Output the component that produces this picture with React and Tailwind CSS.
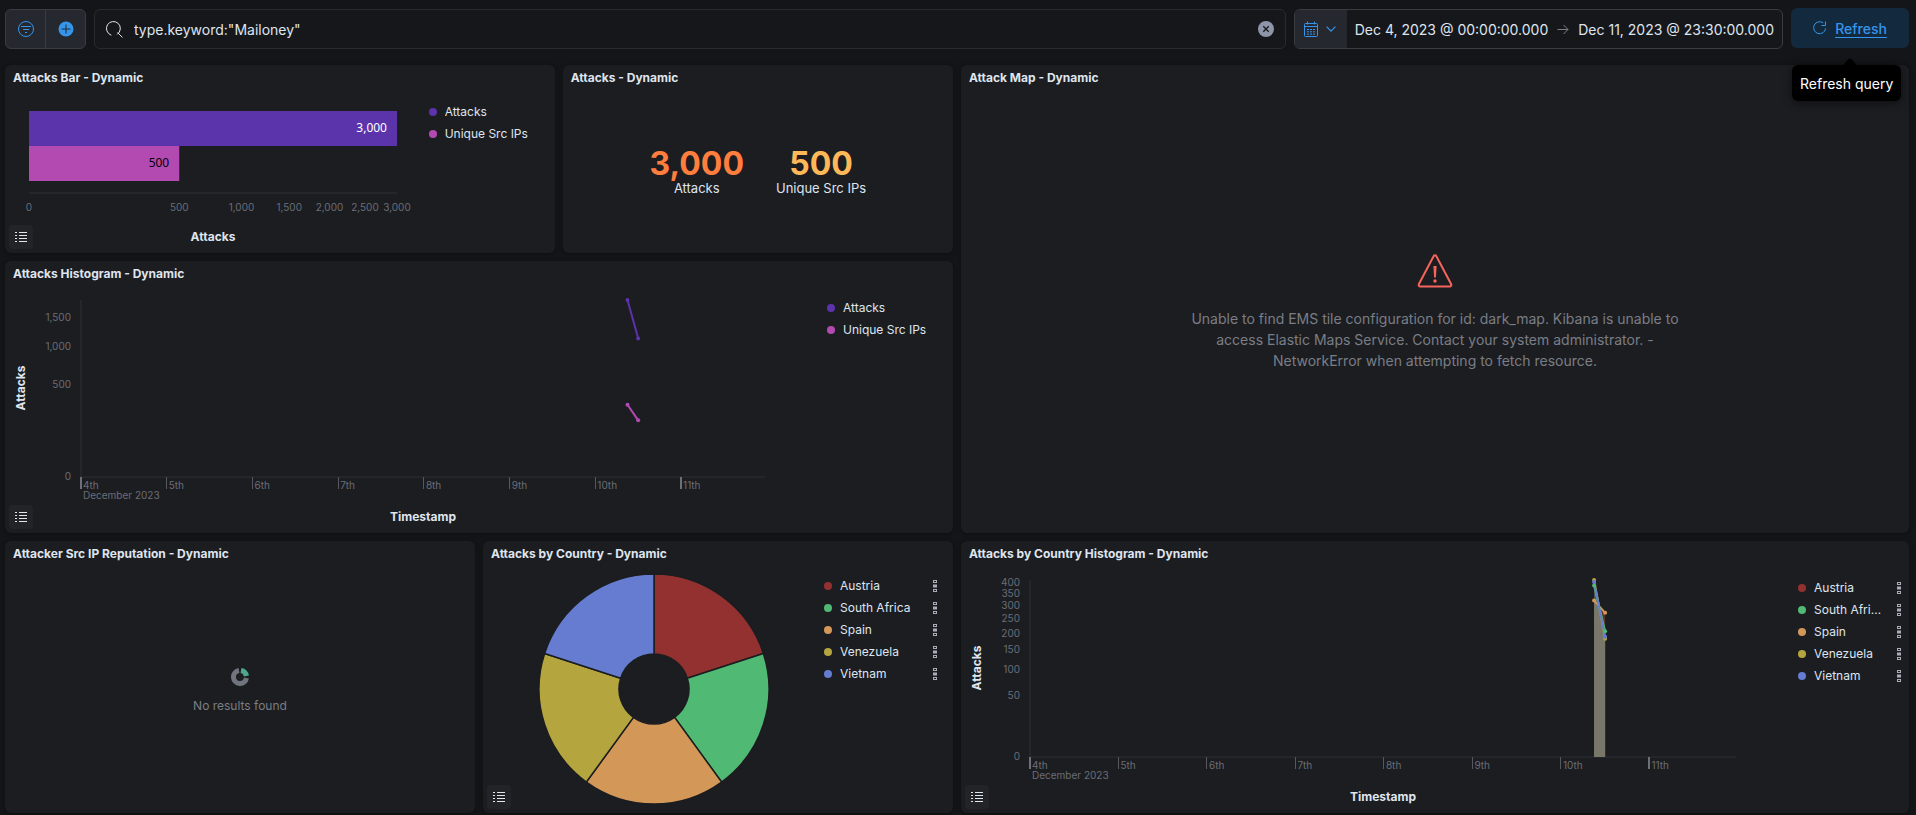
import { useLayoutEffect, useRef, useState } from "react";

const COUNTRIES = [
  { name: "Austria", color: "#933030" },
  { name: "South Africa", color: "#50b973" },
  { name: "Spain", color: "#d39858" },
  { name: "Venezuela", color: "#b4a53e" },
  { name: "Vietnam", color: "#667cd1" },
];

const METRICS = [
  { name: "Attacks", color: "#5b33ab" },
  { name: "Unique Src IPs", color: "#b34ab2" },
];

const DAYS = ["4th", "5th", "6th", "7th", "8th", "9th", "10th", "11th"];
const RANGE_DAYS = 7.979;

/* Measures the width that a chart has, so that it can be drawn to fit. */
function useWidth() {
  const ref = useRef(null);
  const [width, setWidth] = useState(0);
  useLayoutEffect(() => {
    const el = ref.current;
    const measure = () => setWidth(Math.round(el.clientWidth));
    measure();
    const observer = new ResizeObserver(measure);
    observer.observe(el);
    return () => observer.disconnect();
  }, []);
  return [ref, width];
}

function ListIcon() {
  return (
    <svg width="12" height="12" viewBox="0 0 12 12" fill="#dfe5ef" aria-hidden="true" shapeRendering="crispEdges">
      {[1, 4, 7, 10].map((y) => (
        <g key={y}>
          <rect x="0" y={y} width="2" height="1" />
          <rect x="4" y={y} width="8" height="1" />
        </g>
      ))}
    </svg>
  );
}

function Panel({ title, className, legendToggle, children }) {
  return (
    <section className={`relative flex min-w-0 flex-col rounded-md bg-[#1c1d21] shadow-[0_1px_4px_rgba(0,0,0,0.35)] ${className}`}>
      <h2 className="h-[26px] shrink-0 truncate px-2 text-xs leading-[26px] font-bold text-[#dfe5ef]">{title}</h2>
      <div className="flex min-h-0 flex-1">{children}</div>
      {legendToggle && (
        <button
          type="button"
          aria-label="Toggle legend"
          className="absolute bottom-1 left-1 flex h-6 w-6 items-center justify-center rounded bg-[#232428]"
        >
          <ListIcon />
        </button>
      )}
    </section>
  );
}

function Legend({ items, actions, className }) {
  return (
    <ul className={`shrink-0 pl-2 text-xs text-[#dfe5ef] ${className}`}>
      {items.map((item) => (
        <li key={item.name} className="flex h-[22px] items-center gap-2">
          <svg width="8" height="8" className="shrink-0" aria-hidden="true">
            <circle cx="4" cy="4" r="4" fill={item.color} />
          </svg>
          <button type="button" className="min-w-0 flex-1 truncate text-left">
            {item.name}
          </button>
          {actions && (
            <button type="button" aria-label={`${item.name} options`} className="ml-1.5 shrink-0">
              <svg width="4" height="12" viewBox="0 0 4 12" fill="none" stroke="#a9adb8" aria-hidden="true">
                <rect x="0.5" y="0.5" width="3" height="2" />
                <rect x="0.5" y="5" width="3" height="2" fill="#a9adb8" />
                <rect x="0.5" y="9.5" width="3" height="2" />
              </svg>
            </button>
          )}
        </li>
      ))}
    </ul>
  );
}

function AttacksBarChart() {
  const [ref, width] = useWidth();
  const left = 24;
  const plot = Math.max(width - 48, 0);
  const x = (v) => left + plot * Math.sqrt(v / 3000);
  return (
    <div ref={ref} className="min-w-0 flex-1">
      <svg width={width} height="162" role="img" aria-label="Attacks by type">
        <rect x={left} y="20" width={plot} height="35" fill="#5b33ab" />
        <rect x={left} y="55" width={x(500) - left} height="35" fill="#b34ab2" />
        <g fontSize="12" textAnchor="end" dominantBaseline="central" className="font-['Noto_Sans',sans-serif]">
          <text x={x(3000) - 10} y="36" fill="#ffffff">3,000</text>
          <text x={x(500) - 10} y="71" fill="#000000">500</text>
        </g>
        <rect x={left} y="101" width={plot} height="2" fill="#25262b" />
        <g fontSize="10" textAnchor="middle" dominantBaseline="central" fill="#6a6d76">
          {[0, 500, 1000, 1500, 2000, 2500, 3000].map((v) => (
            <text key={v} x={x(v)} y="116">{v.toLocaleString("en-US")}</text>
          ))}
        </g>
        <text x={left + plot / 2} y="145" fontSize="12" fontWeight="700" textAnchor="middle" dominantBaseline="central" fill="#dfe5ef">
          Attacks
        </text>
      </svg>
    </div>
  );
}

function TimeChart({ left, ticks, max, series, filled, label }) {
  const [ref, width] = useWidth();
  const top = 13;
  const base = 190;
  const plot = Math.max(width - left - 54, 0);
  const x = (d) => left + (plot * d) / RANGE_DAYS;
  const y = (v) => base - (base - top) * Math.sqrt(v / max);
  const x0 = x(6.375);
  const x1 = x(6.5);
  return (
    <div ref={ref} className="min-w-0 flex-1">
      <svg width={width} height="246" role="img" aria-label={label}>
        <rect x={left - 1} y={top} width="2" height={base - top} fill="#25262b" />
        <rect x={left - 1} y={base - 1} width={plot + 1} height="2" fill="#25262b" />
        <g fontSize="10" dominantBaseline="central" fill="#6a6d76">
          {ticks.map((v) => (
            <text key={v} x={left - 10} y={Math.floor(y(v)) - (v > 0 ? 0 : 1)} textAnchor="end">
              {v.toLocaleString("en-US")}
            </text>
          ))}
          {DAYS.map((day, i) => (
            <g key={day}>
              <rect
                x={Math.floor(x(i)) - (i % 7 === 0 ? 1 : 0)}
                y={base}
                width={i % 7 === 0 ? 2 : 1}
                height="12"
                fill={i % 7 === 0 ? "#6e7077" : "#56585e"}
              />
              <text x={x(i) + 2} y="198">{day}</text>
            </g>
          ))}
          <text x={left + 2} y="208">December 2023</text>
        </g>
        {filled && (
          <g>
            <polygon points={`${x0},${y(321)} ${x1},${y(272)} ${x1},${base} ${x0},${base}`} fill="#5d3520" />
            <polygon points={`${x0},${y(385)} ${x1},${y(207)} ${x1},${base} ${x0},${base}`} fill="#4a5f4c" />
            <polygon points={`${x0},${y(321)} ${x0 + 4},${y(305)} ${x1},${y(183)} ${x1},${base} ${x0},${base}`} fill="#78776a" />
          </g>
        )}
        {series.map((s) => (
          <line
            key={s.color}
            x1={x0}
            y1={y(s.values[0])}
            x2={x1}
            y2={y(s.values[1])}
            stroke={s.color}
            strokeWidth="2"
          />
        ))}
        {series.map((s) => (
          <g key={s.color} fill={s.color}>
            <circle cx={x0} cy={y(s.values[0])} r="2" />
            <circle cx={x1} cy={y(s.values[1])} r="2" />
          </g>
        ))}
        <g fontSize="12" fontWeight="700" textAnchor="middle" dominantBaseline="central" fill="#dfe5ef">
          <text x={left + plot / 2} y="229">Timestamp</text>
          <text transform="translate(15 101) rotate(-90)">Attacks</text>
        </g>
      </svg>
    </div>
  );
}

function CountryDonut() {
  const outer = 115;
  const inner = 35;
  const at = (r, turn) => {
    const a = turn * 2 * Math.PI;
    return `${(r * Math.sin(a)).toFixed(2)} ${(-r * Math.cos(a)).toFixed(2)}`;
  };
  return (
    <div className="flex min-w-0 flex-1 justify-center pt-[6px] pl-[9px]">
      <svg width="232" height="232" viewBox="-116 -116 232 232" role="img" aria-label="Attacks by country">
        {COUNTRIES.map((c, i) => (
          <path
            key={c.name}
            d={`M${at(outer, i / 5)}A${outer} ${outer} 0 0 1 ${at(outer, (i + 1) / 5)}L${at(inner, (i + 1) / 5)}A${inner} ${inner} 0 0 0 ${at(inner, i / 5)}Z`}
            fill={c.color}
            stroke="#1c1d21"
            strokeWidth="1.5"
          />
        ))}
      </svg>
    </div>
  );
}

function Metric({ value, label, color }) {
  return (
    <div className="flex flex-col items-center px-4">
      <span className={`text-[32px] leading-8 font-bold ${color}`}>{value}</span>
      <span className="text-[13px] leading-4 text-[#dfe5ef]">{label}</span>
    </div>
  );
}

function TopBar() {
  return (
    <header className="flex items-start gap-2">
      <div className="mt-px flex h-10 w-[81px] shrink-0 overflow-hidden rounded-md border border-[#3a3c42] bg-[#25282f]">
        <button type="button" aria-label="Saved queries" className="flex w-10 items-center justify-center border-r border-[#3a3c42]">
          <svg width="16" height="16" viewBox="0 0 16 16" fill="none" stroke="#3595ea" aria-hidden="true">
            <circle cx="8" cy="8" r="7.5" />
            <path d="M3 5.5h10M5 8.5h6M7 11.5h2" />
          </svg>
        </button>
        <button type="button" aria-label="Add filter" className="flex flex-1 items-center justify-center">
          <svg width="16" height="16" viewBox="0 0 16 16" aria-hidden="true">
            <circle cx="8" cy="8" r="7.5" fill="#3595ea" />
            <path d="M3.5 8h9M8 3.5v9" stroke="#25282f" fill="none" />
          </svg>
        </button>
      </div>

      <div className="mt-px flex h-10 min-w-0 flex-1 items-center rounded-md border border-[#2a2b30] bg-[#16171b] px-[11px]">
        <svg width="17" height="17" viewBox="0 0 17 17" fill="none" stroke="#dfe5ef" className="shrink-0" aria-hidden="true">
          <path d="M5 14.1A7 7 0 1 1 11.5 13.2M11.8 11.8l4.4 4.4" strokeLinecap="round" />
        </svg>
        <input
          type="text"
          aria-label="Search query"
          defaultValue={'type.keyword:"Mailoney"'}
          className="ml-[11px] h-full min-w-0 flex-1 bg-transparent text-sm text-[#dfe5ef] outline-none"
        />
        <button type="button" aria-label="Clear input" className="shrink-0">
          <svg width="16" height="16" viewBox="0 0 16 16" aria-hidden="true">
            <circle cx="8" cy="8" r="8" fill="#8d95a8" />
            <path d="M5.3 5.3l5.4 5.4M10.7 5.3l-5.4 5.4" stroke="#16171b" strokeWidth="1.3" fill="none" />
          </svg>
        </button>
      </div>

      <div className="mt-px flex h-10 shrink-0 overflow-hidden rounded-md border border-[#3a3c42] bg-[#16171b] text-sm text-[#dfe5ef]">
        <button type="button" aria-label="Date quick select" className="flex w-[52px] items-center gap-2 bg-[#25282f] pl-[9px]">
          <svg width="14" height="16" viewBox="0 0 14 16" fill="none" stroke="#3595ea" aria-hidden="true">
            <rect x="0.5" y="2.5" width="13" height="13" rx="1" />
            <path d="M3.5 0.5v3M10.5 0.5v3M0.5 5.5h13" />
            <path d="M3 8.5h2M6 8.5h2M9 8.5h2M3 10.8h2M6 10.8h2M9 10.8h2M3 13.1h2M6 13.1h2M9 13.1h2" />
          </svg>
          <svg width="10" height="6" viewBox="0 0 10 6" fill="none" stroke="#3595ea" strokeWidth="1.2" aria-hidden="true">
            <path d="M0.6 0.7L5 5.1 9.4 0.7" />
          </svg>
        </button>
        <div className="flex items-center gap-[9px] px-2">
          <button type="button" className="h-full pt-0.5 whitespace-nowrap">Dec 4, 2023 @ 00:00:00.000</button>
          <svg width="12" height="11" viewBox="0 0 12 11" fill="none" stroke="#7b7f89" aria-hidden="true">
            <path d="M0.5 5.5h10.5M6.5 1l4.5 4.5L6.5 10" />
          </svg>
          <button type="button" className="h-full pt-0.5 whitespace-nowrap">Dec 11, 2023 @ 23:30:00.000</button>
        </div>
      </div>

      <div className="relative shrink-0">
        <button
          type="button"
          aria-describedby="refresh-tip"
          className="flex h-10 w-[118px] items-center justify-center gap-2 rounded-md bg-[#13293d] pt-0.5 text-sm font-medium text-[#3595ea]"
        >
          <svg width="14" height="14" viewBox="0 0 14 14" fill="none" stroke="#3595ea" className="-mt-0.5" aria-hidden="true">
            <path d="M10.2 1.9A6 6 0 1 0 12.6 7.4" />
            <path d="M12.5 0.5v4h-4" />
          </svg>
          <span className="underline underline-offset-[3px]">Refresh</span>
        </button>
        <div
          id="refresh-tip"
          role="tooltip"
          className="absolute top-[57px] left-px z-10 rounded-md bg-black px-2 pt-[9px] pb-[7px] text-sm whitespace-nowrap text-white shadow-[0_2px_8px_rgba(0,0,0,0.5)]"
        >
          Refresh query
          <svg width="14" height="7" viewBox="0 0 14 7" className="absolute bottom-full left-[51px]" aria-hidden="true">
            <path d="M0 7L6 0.8Q7 0 8 0.8L14 7Z" fill="#000000" />
          </svg>
        </div>
      </div>
    </header>
  );
}

export default function App() {
  return (
    <div className="min-h-screen bg-[#141518] pt-2 pr-[7px] pb-[2px] pl-[5px] font-['Inter','Liberation_Sans',sans-serif]">
      <TopBar />
      <main className="mt-4 grid auto-rows-[20px] grid-cols-24 gap-2">
        <Panel title="Attacks Bar - Dynamic" className="col-span-7 row-span-7" legendToggle>
          <AttacksBarChart />
          <Legend items={METRICS} className="w-[134px] pt-[10px]" />
        </Panel>

        <Panel title="Attacks - Dynamic" className="col-span-5 row-span-7">
          <div className="flex flex-1 items-center justify-center">
            <Metric value="3,000" label="Attacks" color="text-[#ff7e3e]" />
            <Metric value="500" label="Unique Src IPs" color="text-[#ffb858]" />
          </div>
        </Panel>

        <Panel title="Attack Map - Dynamic" className="col-span-12 row-span-17">
          <div className="flex flex-1 flex-col items-center justify-center gap-5">
            <svg width="36" height="34" viewBox="0 0 36 34" aria-hidden="true">
              <path d="M16.6 2.2a1.6 1.6 0 0 1 2.8 0L34.2 30.2a1.6 1.6 0 0 1-1.4 2.3H3.2a1.6 1.6 0 0 1-1.4-2.3Z" fill="none" stroke="#f6645c" strokeWidth="2" />
              <path d="M16.4 12h3.2l-0.7 11.5h-1.8Z" fill="#f6645c" />
              <circle cx="18" cy="27" r="1.7" fill="#f6645c" />
            </svg>
            <p className="max-w-[504px] text-center text-sm leading-[21px] text-[#7a7d86]">
              Unable to find EMS tile configuration for id: dark_map. Kibana is unable to access Elastic Maps Service.
              Contact your system administrator. - NetworkError when attempting to fetch resource.
            </p>
          </div>
        </Panel>

        <Panel title="Attacks Histogram - Dynamic" className="col-span-12 row-span-10" legendToggle>
          <TimeChart
            label="Attacks over time"
            left={76}
            max={1836}
            ticks={[0, 500, 1000, 1500]}
            series={[
              { color: "#5b33ab", values: [1836, 1124] },
              { color: "#b34ab2", values: [306, 188] },
            ]}
          />
          <Legend items={METRICS} className="w-[134px] pt-[10px]" />
        </Panel>

        <Panel title="Attacker Src IP Reputation - Dynamic" className="col-span-6 row-span-10">
          <div className="flex flex-1 flex-col items-center justify-center gap-3 pt-0.5 text-xs text-[#7a7d86]">
            <svg width="18" height="18" viewBox="0 0 18 18" fill="none" strokeWidth="5" aria-hidden="true">
              <path d="M8 2.58A6.5 6.5 0 1 0 15.42 10" stroke="#70747e" />
              <path d="M10 2.58A6.5 6.5 0 0 1 15.42 8" stroke="#4da78e" />
            </svg>
            <p>No results found</p>
          </div>
        </Panel>

        <Panel title="Attacks by Country - Dynamic" className="col-span-6 row-span-10" legendToggle>
          <CountryDonut />
          <Legend items={COUNTRIES} actions className="w-[137px] pt-2 pr-4" />
        </Panel>

        <Panel title="Attacks by Country Histogram - Dynamic" className="col-span-12 row-span-10" legendToggle>
          <TimeChart
            label="Attacks by country over time"
            left={69}
            max={410}
            ticks={[0, 50, 100, 150, 200, 250, 300, 350, 400]}
            filled
            series={[
              { color: "#b4a53e", values: [410, 183] },
              { color: "#d39858", values: [321, 272] },
              { color: "#50b973", values: [385, 207] },
              { color: "#667cd1", values: [401, 189] },
            ]}
          />
          <Legend items={COUNTRIES} actions className="w-[119px] pt-[10px] pr-2" />
        </Panel>
      </main>
    </div>
  );
}
